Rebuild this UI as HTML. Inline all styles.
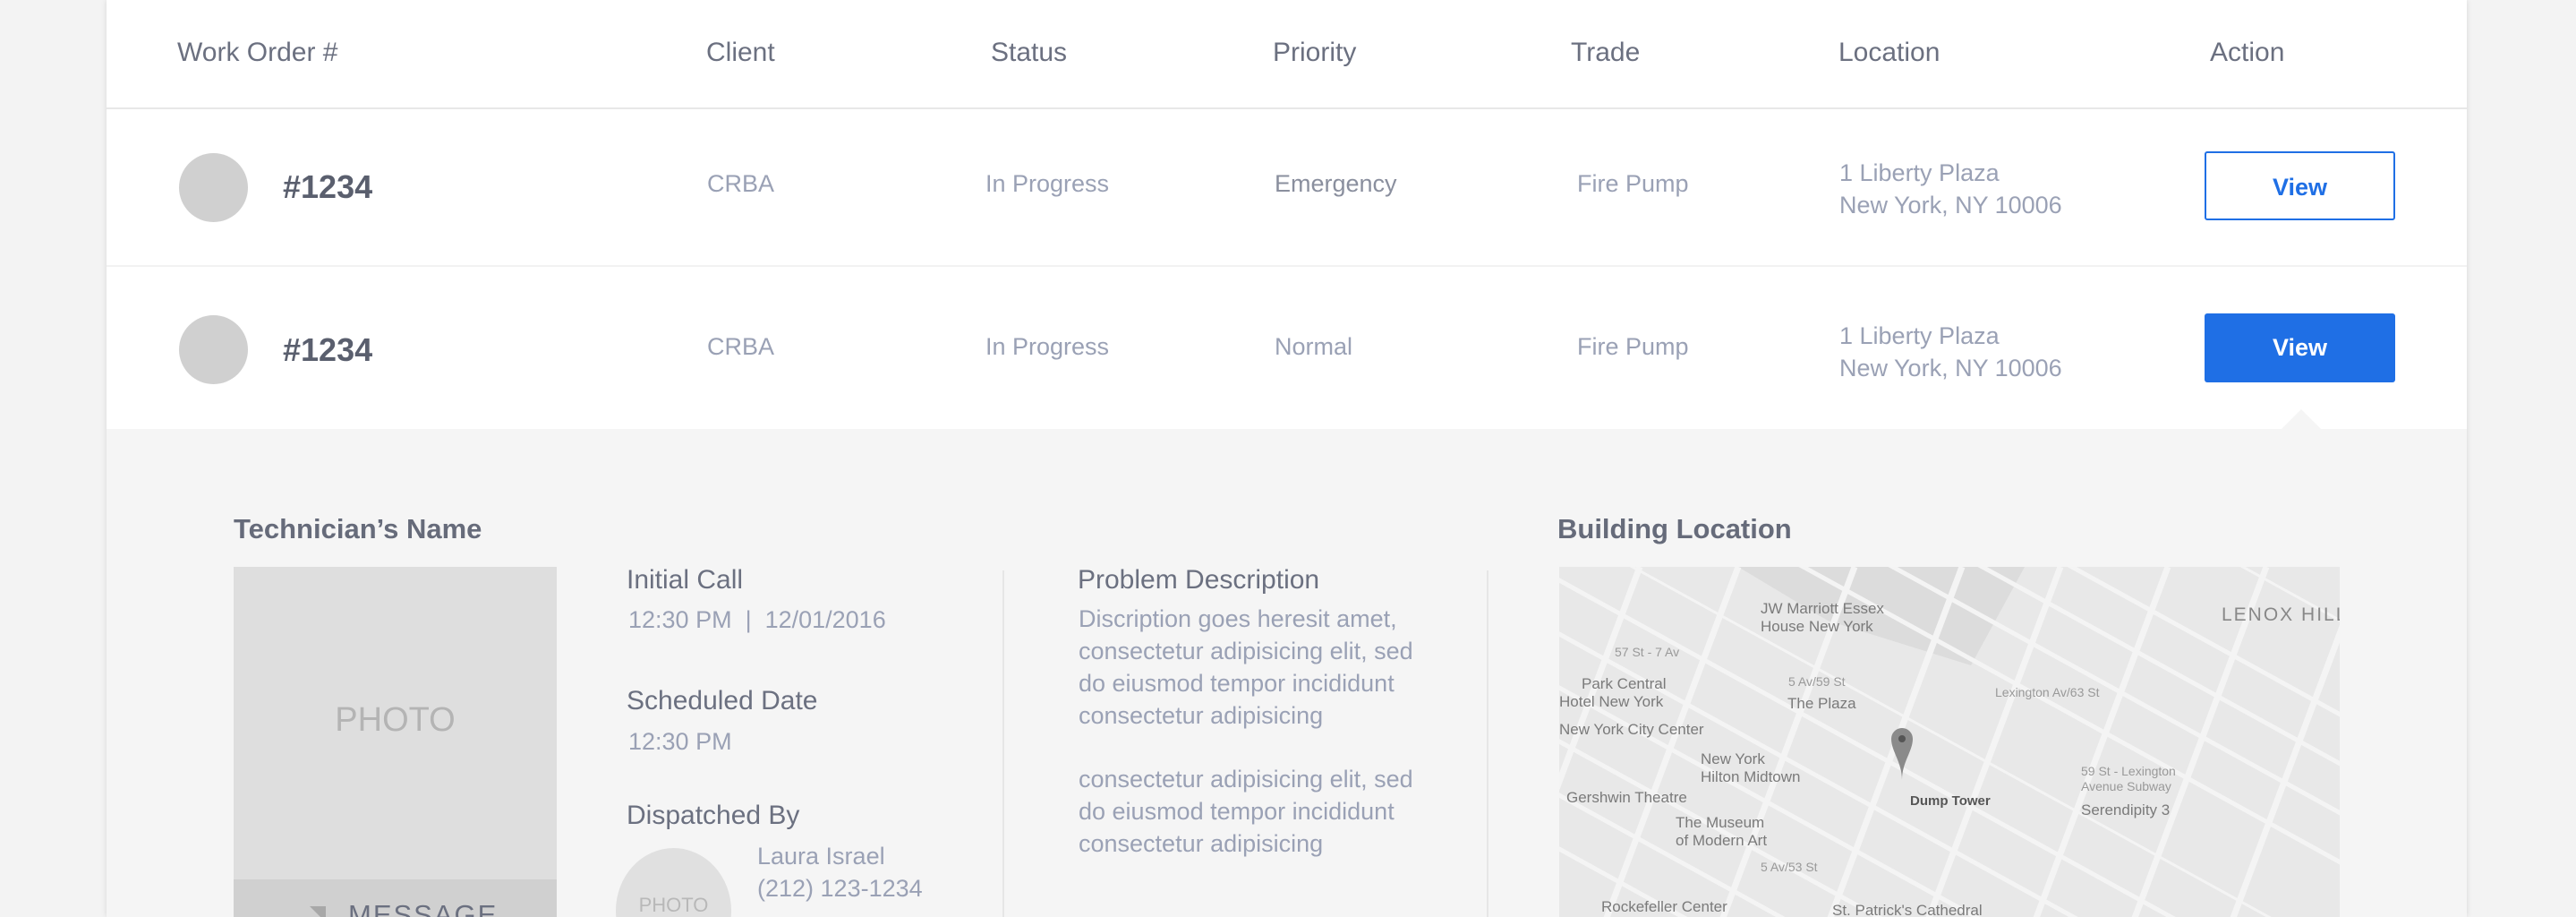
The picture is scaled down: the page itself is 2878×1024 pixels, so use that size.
<!DOCTYPE html>
<html><head><meta charset="utf-8">
<style>
*{margin:0;padding:0;box-sizing:border-box}
html,body{width:2878px;height:1024px;overflow:hidden;background:#f3f3f3;font-family:"Liberation Sans",sans-serif}
#wrap{position:relative;width:2878px;height:1024px;overflow:hidden}
.card{position:absolute;left:119px;top:0;width:2637px;height:1024px;background:#fff;box-shadow:0 0 6px rgba(0,0,0,.12);overflow:hidden}
.t{position:absolute;white-space:nowrap}
.h{color:#6b7080;font-size:30px;top:42px}
.d{color:#9aa1b5;font-size:27px}
.line{position:absolute;left:0;width:2637px}
.av{position:absolute;width:77px;height:77px;border-radius:50%;background:#d0d0d0;left:81px}
.num{color:#5a5f6e;font-size:36px;font-weight:bold;left:197px}
.btn{position:absolute;left:2344px;width:213px;height:77px;border-radius:3px;font-size:27px;font-weight:bold;text-align:center;line-height:77px}
.panel{position:absolute;left:0;top:479px;width:2637px;height:545px;background:#f5f5f5}
.lab{color:#666b7a;font-size:31px}
.lab2{color:#6b7080;font-size:30px}
.v{color:#9aa1b5;font-size:27px}
</style></head><body><div id="wrap">
<div class="card">
  <div class="t h" style="left:79px">Work Order #</div>
  <div class="t h" style="left:670px">Client</div>
  <div class="t h" style="left:988px">Status</div>
  <div class="t h" style="left:1303px">Priority</div>
  <div class="t h" style="left:1636px">Trade</div>
  <div class="t h" style="left:1935px">Location</div>
  <div class="t h" style="left:2350px">Action</div>
  <div class="line" style="top:120px;height:2px;background:#e8e8e8"></div>

  <div class="av" style="top:171px"></div>
  <div class="t num" style="top:188px">#1234</div>
  <div class="t d" style="left:671px;top:190px">CRBA</div>
  <div class="t d" style="left:982px;top:190px">In Progress</div>
  <div class="t d" style="left:1305px;top:190px;color:#8a8f9e">Emergency</div>
  <div class="t d" style="left:1643px;top:190px">Fire Pump</div>
  <div class="t d" style="left:1936px;top:178px">1 Liberty Plaza</div>
  <div class="t d" style="left:1936px;top:214px">New York, NY 10006</div>
  <div class="btn" style="top:169px;border:2px solid #1f6fe5;color:#1f6fe5;background:#fff">View</div>
  <div class="line" style="top:296px;height:2px;background:#f2f2f2"></div>

  <div class="av" style="top:352px"></div>
  <div class="t num" style="top:370px">#1234</div>
  <div class="t d" style="left:671px;top:372px">CRBA</div>
  <div class="t d" style="left:982px;top:372px">In Progress</div>
  <div class="t d" style="left:1305px;top:372px">Normal</div>
  <div class="t d" style="left:1643px;top:372px">Fire Pump</div>
  <div class="t d" style="left:1936px;top:360px">1 Liberty Plaza</div>
  <div class="t d" style="left:1936px;top:396px">New York, NY 10006</div>
  <div class="btn" style="top:350px;background:#1f6fe5;color:#fff">View</div>

  <div class="panel"></div>
  <div style="position:absolute;left:2430px;top:457px;width:0;height:0;border-left:22px solid transparent;border-right:22px solid transparent;border-bottom:22px solid #f5f5f5"></div>

  <div class="t lab" style="left:142px;top:573px;font-weight:bold">Technician’s Name</div>
  <div style="position:absolute;left:142px;top:633px;width:361px;height:349px;background:#dedede"></div>
  <div class="t" style="left:142px;top:783px;width:361px;text-align:center;color:#b4b4b4;font-size:38px">PHOTO</div>
  <div style="position:absolute;left:142px;top:982px;width:361px;height:42px;background:#d0d0d0;overflow:hidden">
    <div style="position:absolute;left:85px;top:30px;width:0;height:0;border-left:18px solid transparent;border-top:18px solid #a8a8a8"></div>
    <div class="t" style="left:128px;top:22px;color:#6b7080;font-size:31px;letter-spacing:2px">MESSAGE</div>
  </div>

  <div class="t lab2" style="left:581px;top:631px">Initial Call</div>
  <div class="t v" style="left:583px;top:677px">12:30 PM &nbsp;|&nbsp; 12/01/2016</div>
  <div class="t lab2" style="left:581px;top:766px">Scheduled Date</div>
  <div class="t v" style="left:583px;top:813px">12:30 PM</div>
  <div class="t lab2" style="left:581px;top:894px">Dispatched By</div>
  <div style="position:absolute;left:569px;top:947px;width:129px;height:77px;overflow:hidden">
    <div style="position:absolute;left:0;top:0;width:129px;height:140px;border-radius:50%;background:#e0e0e0"></div>
    <div class="t" style="left:0;top:51px;width:129px;text-align:center;color:#b8b8b8;font-size:22px">PHOTO</div>
  </div>
  <div class="t v" style="left:727px;top:941px">Laura Israel</div>
  <div class="t v" style="left:727px;top:977px">(212) 123-1234</div>

  <div style="position:absolute;left:1001px;top:637px;width:2px;height:387px;background:#e6e6e6"></div>
  <div style="position:absolute;left:1542px;top:637px;width:2px;height:387px;background:#e6e6e6"></div>

  <div class="t lab2" style="left:1085px;top:631px">Problem Description</div>
  <div class="t v" style="left:1086px;top:673px;line-height:36px">Discription goes heresit amet,<br>consectetur adipisicing elit, sed<br>do eiusmod tempor incididunt<br>consectetur adipisicing</div>
  <div class="t v" style="left:1086px;top:852px;line-height:36px">consectetur adipisicing elit, sed<br>do eiusmod tempor incididunt<br>consectetur adipisicing</div>

  <div class="t lab" style="left:1621px;top:573px;font-weight:bold">Building Location</div>
  <svg style="position:absolute;left:1623px;top:633px" width="872" height="391" viewBox="0 0 872 391">
    <rect width="872" height="391" fill="#e8e8e8"/>
    <path d="M200 0 L520 0 L460 110 L300 60 Z" fill="#dcdcdc"/>
    <g stroke="#f4f4f4" stroke-width="5">
      <line x1="-100" y1="-40" x2="900" y2="510"/><line x1="-100" y1="20" x2="900" y2="570"/>
      <line x1="-100" y1="80" x2="900" y2="630"/><line x1="-100" y1="140" x2="900" y2="690"/>
      <line x1="-100" y1="200" x2="900" y2="750"/><line x1="-100" y1="260" x2="900" y2="810"/>
      <line x1="0" y1="-150" x2="1000" y2="400"/><line x1="100" y1="-150" x2="1100" y2="400"/>
      <line x1="200" y1="-150" x2="1200" y2="400"/><line x1="300" y1="-150" x2="1300" y2="400"/>
      <line x1="-100" y1="-100" x2="900" y2="450" stroke-width="3"/>
      <line x1="400" y1="-200" x2="1400" y2="350" stroke-width="3"/>
    </g>
    <g stroke="#f4f4f4" stroke-width="7">
      <line x1="90" y1="0" x2="-60" y2="400"/><line x1="200" y1="0" x2="50" y2="400"/>
      <line x1="330" y1="0" x2="180" y2="400"/><line x1="450" y1="0" x2="300" y2="400"/>
      <line x1="560" y1="0" x2="410" y2="400"/><line x1="680" y1="0" x2="530" y2="400"/>
      <line x1="790" y1="0" x2="640" y2="400"/><line x1="900" y1="0" x2="750" y2="400"/>
    </g>
    <g font-family="Liberation Sans,sans-serif" fill="#7a7a7a" font-size="17">
      <text x="225" y="52">JW Marriott Essex</text><text x="225" y="72">House New York</text>
      <text x="62" y="100" font-size="14" fill="#999">57 St - 7 Av</text>
      <text x="256" y="133" font-size="14" fill="#999">5 Av/59 St</text>
      <text x="25" y="136">Park Central</text><text x="0" y="156">Hotel New York</text>
      <text x="255" y="158">The Plaza</text>
      <text x="0" y="187">New York City Center</text>
      <text x="158" y="220">New York</text><text x="158" y="240">Hilton Midtown</text>
      <text x="8" y="263">Gershwin Theatre</text>
      <text x="392" y="266" font-weight="bold" fill="#555" font-size="15">Dump Tower</text>
      <text x="130" y="291">The Museum</text><text x="130" y="311">of Modern Art</text>
      <text x="487" y="145" font-size="14" fill="#999">Lexington Av/63 St</text>
      <text x="583" y="233" font-size="14" fill="#999">59 St - Lexington</text><text x="583" y="250" font-size="14" fill="#999">Avenue Subway</text>
      <text x="583" y="277">Serendipity 3</text>
      <text x="740" y="60" font-size="21" letter-spacing="2" fill="#888">LENOX HILL</text>
      <text x="225" y="340" font-size="14" fill="#999">5 Av/53 St</text>
      <text x="47" y="385">Rockefeller Center</text>
      <text x="305" y="389">St. Patrick's Cathedral</text>
    </g>
    <path d="M371 192 a12 12 0 0 1 24 0 c0 14 -12 26 -12 46 c0 -20 -12 -32 -12 -46z" fill="#8a8a8a"/>
    <circle cx="383" cy="192" r="4" fill="#555"/>
  </svg>
</div>
</div></body></html>
